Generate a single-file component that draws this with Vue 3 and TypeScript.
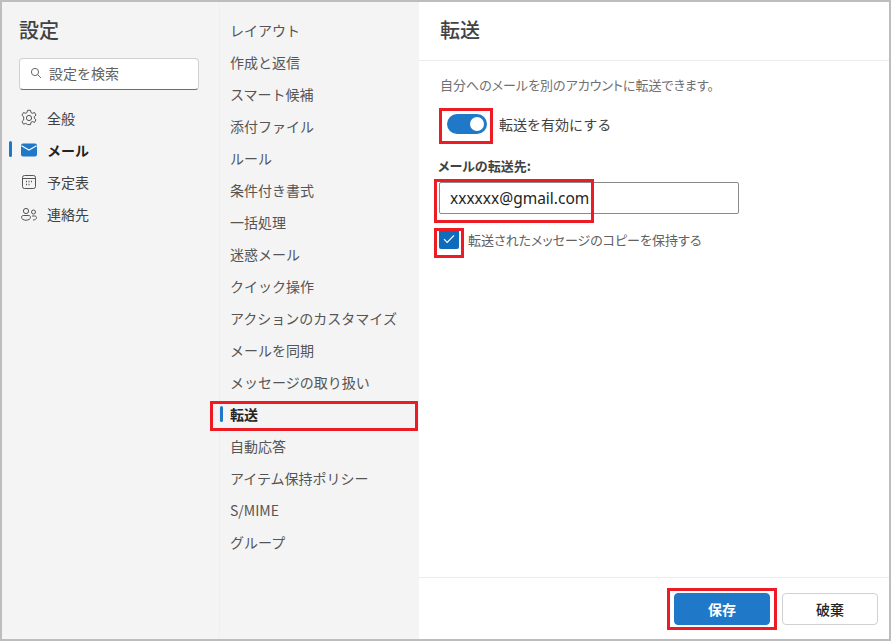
<script setup lang="ts">
const subItems: string[] = ['レイアウト','作成と返信','スマート候補','添付ファイル','ルール','条件付き書式','一括処理','迷惑メール','クイック操作','アクションのカスタマイズ','メールを同期','メッセージの取り扱い','転送','自動応答','アイテム保持ポリシー','S/MIME','グループ']
</script>

<template>
  <div class="frame">
    <aside class="nav">
      <h1 class="title">設定</h1>
      <div class="search">
        <svg width="12" height="12" viewBox="0 0 12 12" fill="none" stroke="#6a6a6a" stroke-width="1"><circle cx="5" cy="5" r="3.6"/><path d="M7.6 7.6 11 11"/></svg>
        <span>設定を検索</span>
      </div>
      <ul class="main-list">
        <li class="main-item">
          <svg class="ico" width="18" height="18" viewBox="0 0 18 18" fill="none" stroke="#555" stroke-width="1"><circle cx="9" cy="9" r="2.6"/><path d="M7.500 1.300h3l.5 2.300 1.300.7 2.200-.8 1.500 2.600-1.700 1.600v1.500l1.700 1.600-1.500 2.600-2.200-.8-1.300.7-.5 2.300h-3L7 15.100l-1.300-.7-2.200.8L2 12.600l1.700-1.600V7.900L2 6.100l1.500-2.600 2.200.8L7 3.600z" stroke-linejoin="round"/></svg>
          <span>全般</span>
        </li>
        <li class="main-item active">
          <svg class="ico" width="18" height="14" viewBox="0 0 18 14"><rect x="1" y="0.500" width="16" height="13" rx="2" fill="#1f78c8"/><path d="M1.500 2.800 9 7l7.500-4.200" fill="none" stroke="#fff" stroke-width="1.100"/></svg>
          <span>メール</span>
        </li>
        <li class="main-item">
          <svg class="ico" width="18" height="18" viewBox="0 0 18 18" fill="none" stroke="#555" stroke-width="1"><rect x="2.500" y="2.500" width="13" height="13" rx="2"/><path d="M2.500 5.500h13"/><path d="M6 8.500h1M8.500 8.500h1M11 8.500h1M6 11.500h1M8.500 11.500h1" stroke-width="1.300"/></svg>
          <span>予定表</span>
        </li>
        <li class="main-item">
          <svg class="ico" width="18" height="18" viewBox="0 0 18 18" fill="none" stroke="#555" stroke-width="1"><circle cx="6" cy="6" r="2.600"/><circle cx="13.500" cy="7" r="2"/><path d="M1.500 12.200c0-1 .8-1.700 1.700-1.700h5.600c1 0 1.700.7 1.700 1.700 0 2-2 3-4.500 3s-4.500-1-4.500-3z"/><path d="M12 11h2.800c.9 0 1.700.6 1.700 1.500 0 1.600-1.500 2.500-3.500 2.500"/></svg>
          <span>連絡先</span>
        </li>
      </ul>
    </aside>
    <nav class="sub">
      <ul class="sub-list">
        <li v-for="item in subItems" :key="item" class="sub-item" :class="{ active: item === '転送' }">{{ item }}</li>
      </ul>
    </nav>
    <main class="content">
      <header class="head"><h2 class="title">転送</h2></header>
      <section class="body">
        <p class="desc">自分へのメールを別のアカウントに転送できます。</p>
        <div class="toggle-row">
          <span class="toggle"><span class="knob"></span></span>
          <span>転送を有効にする</span>
        </div>
        <div class="label">メールの転送先:</div>
        <div class="input">xxxxxx@gmail.com</div>
        <div class="check-row">
          <span class="check">
            <svg width="12" height="10" viewBox="0 0 12 10" fill="none" stroke="#fff" stroke-width="1.200"><path d="M1 5.200 4.200 8.500 11 1.300"/></svg>
          </span>
          <span>転送されたメッセージのコピーを保持する</span>
        </div>
      </section>
      <footer class="foot">
        <button class="btn primary">保存</button>
        <button class="btn">破棄</button>
      </footer>
    </main>
    <i class="mark m-toggle"></i>
    <i class="mark m-input"></i>
    <i class="mark m-check"></i>
    <i class="mark m-sub"></i>
    <i class="mark m-save"></i>
  </div>
</template>

<style>
html, body { margin: 0; }
</style>

<style scoped>
* { box-sizing: border-box; }
.frame {
  position: relative;
  display: flex;
  width: 891px;
  height: 641px;
  border: 2px solid #bdbdbd;
  background: #fff;
  font-family: "Noto Sans CJK JP", "Noto Sans", sans-serif;
  font-size: 14px;
  color: #424242;
  overflow: hidden;
}
ul { list-style: none; margin: 0; padding: 0; }
.title { margin: 0; font-size: 20px; font-weight: 500; line-height: 28px; color: #424242; }
.nav { width: 217px; flex: none; background: #f4f4f4; padding: 14px 20px 0 17px; }
.search {
  display: flex; align-items: center; gap: 7px;
  height: 32px; margin-top: 14px; padding: 0 0 2px 10px;
  background: #fff; border: 1px solid #d1d1d1; border-bottom-color: #6e6e6e; border-radius: 4px;
  font-size: 14px; color: #616161;
}
.main-list { margin-top: 12px; }
.main-item { position: relative; display: flex; align-items: center; height: 32px; padding-bottom: 1px; }
.main-item span { margin-left: 9px; }
.ico { flex: none; width: 18px; margin-left: 1px; }
.main-item.active { font-weight: 700; color: #242424; }
.main-item.active::before {
  content: ""; position: absolute; left: -10px; top: 7px; width: 3px; height: 16px; border-radius: 2px; background: #1f78c8;
}
.sub { width: 200px; flex: none; background: #f4f4f4; border-left: 1px solid #efefef; padding: 13px 0 0 10px; }
.sub-item { position: relative; height: 32px; line-height: 31px; color: #555; white-space: nowrap; }
.sub-item.active { font-weight: 700; color: #242424; }
.sub-item.active::before {
  content: ""; position: absolute; left: -10px; top: 7px; width: 3px; height: 16px; border-radius: 2px; background: #1f78c8;
}
.content { flex: 1; min-width: 0; display: flex; flex-direction: column; }
.head { height: 59px; padding: 14px 0 0 21px; border-bottom: 1px solid #ececec; flex: none; }
.body { flex: 1; padding: 14px 0 0 20px; }
.desc { margin: 0 0 0 1px; font-size: 13px; line-height: 20px; color: #707070; font-feature-settings: "palt"; }
.toggle-row { display: flex; align-items: center; gap: 12px; margin-top: 17px; height: 24px; margin-left: 8px; }
.toggle { display: flex; align-items: center; justify-content: flex-end; width: 40px; height: 20px; border-radius: 10px; background: #1f78c8; padding-right: 3px; }
.knob { width: 14px; height: 14px; border-radius: 50%; background: #fff; }
.label { margin-top: 20px; margin-left: -1px; font-size: 13px; font-weight: 700; line-height: 20px; color: #424242; font-feature-settings: "palt"; }
.input {
  width: 300px; height: 32px; margin-top: 6px;  padding-left: 10px;
  border: 1px solid #8a8a8a; border-radius: 2px;
  font-family: "Noto Sans", sans-serif; font-size: 15.5px; line-height: 30px; color: #242424;
}
.check-row { display: flex; align-items: center; gap: 9px; margin-top: 13px; font-size: 13px; color: #616161; height: 24px; font-feature-settings: "palt"; }
.check { display: flex; align-items: center; justify-content: center; width: 20px; height: 20px; border-radius: 2px; background: #0f6cbd; }
.foot { flex: none; height: 62px; display: flex; justify-content: flex-end; align-items: flex-start; gap: 12px; padding: 15px 11px 0 0; border-top: 1px solid #ececec; }
.btn { width: 96px; height: 32px; border: 1px solid #d1d1d1; border-radius: 4px; background: #fff; font: inherit; font-weight: 500; color: #242424; padding: 0; }
.btn.primary { background: #1f78c8; border-color: #1f78c8; color: #fff; font-weight: 700; }
.mark { position: absolute; border: 3px solid #ed1c24; pointer-events: none; }
.m-toggle { left: 437px; top: 106px; width: 54px; height: 36px; }
.m-input { left: 432px; top: 177px; width: 160px; height: 44px; }
.m-check { left: 432px; top: 226px; width: 30px; height: 30px; }
.m-sub { left: 208px; top: 399px; width: 208px; height: 30px; }
.m-save { left: 665px; top: 586px; width: 110px; height: 42px; }
</style>
